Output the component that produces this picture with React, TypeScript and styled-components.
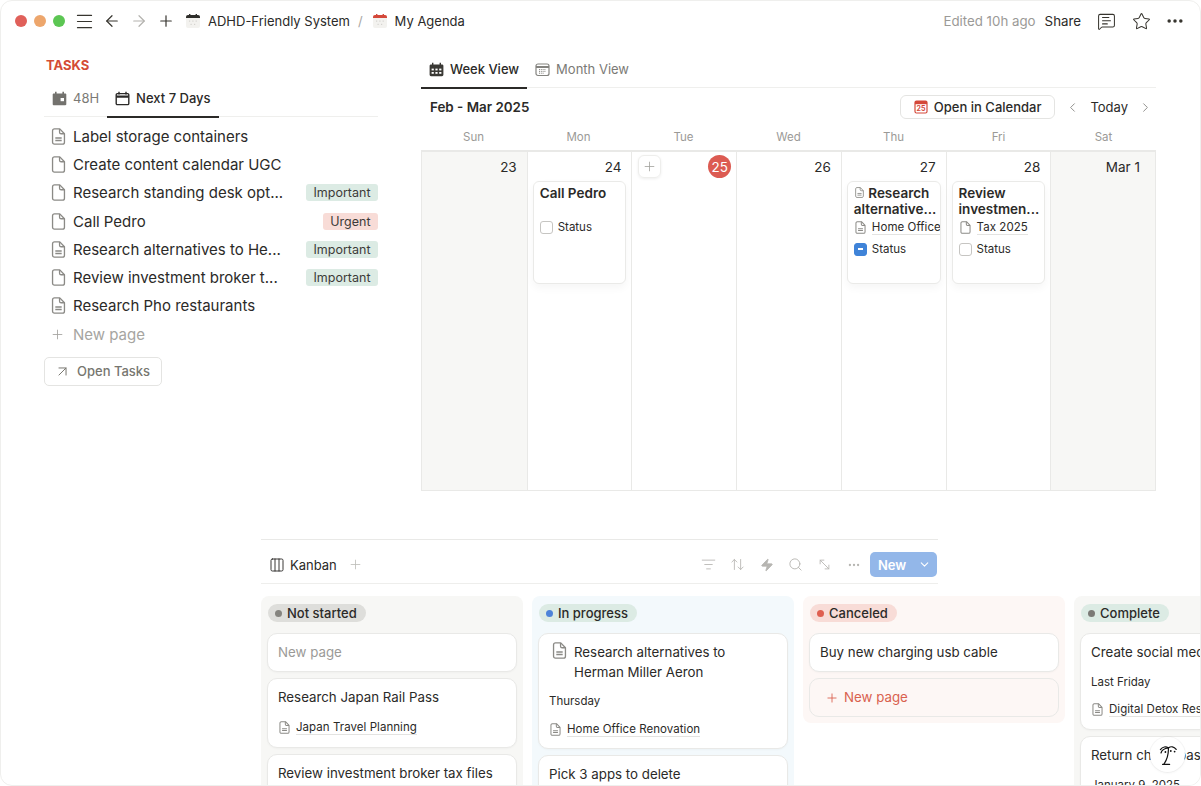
import React from "react";
import styled, { createGlobalStyle } from "styled-components";
import {
  ArrowLeft,
  ArrowRight,
  ArrowUpDown,
  ArrowUpRight,
  ChevronDown,
  ChevronLeft,
  ChevronRight,
  Columns3,
  Ellipsis,
  ListFilter,
  Menu,
  MessageSquareText,
  MoveDiagonal2,
  Plus,
  Search,
  Star,
  Zap,
} from "lucide-react";

const GlobalStyle = createGlobalStyle`
  html, body {
    margin: 0;
    padding: 0;
    background: #fff;
    overflow: hidden;
  }
  * { box-sizing: border-box; }
  body {
    font-family: Inter, "Liberation Sans", sans-serif;
    color: #2b2a28;
  }
`;

const Win = styled.div`
  width: 1201px;
  height: 786px;
  overflow: hidden;
  position: relative;
  border-radius: 12px;
  border: 1px solid #efefed;
  padding-top: 1px;
`;

/* top bar */
const TopBar = styled.div`
  display: flex;
  align-items: center;
  height: 38px;
  padding: 0 9px 0 14px;
  font-size: 13px;
`;

const Dots = styled.div`
  display: flex;
  gap: 7px;
  margin-right: 7px;
`;

const Dot = styled.span<{ $c: string }>`
  width: 12px;
  height: 12px;
  border-radius: 50%;
  background: ${({ $c }) => $c};
`;

const NavBtn = styled.span<{ $w: number; $dim?: boolean }>`
  display: flex;
  align-items: center;
  justify-content: center;
  width: ${({ $w }) => $w}px;
  color: ${({ $dim }) => ($dim ? "#b3b2ae" : "#37352f")};
`;

const CrumbIcon = styled.span`
  display: flex;
  margin-left: 4px;
`;

const Crumb = styled.span`
  margin-left: 7px;
  white-space: nowrap;
`;

const Slash = styled.span`
  color: #a8a7a4;
  margin: 0 5px 0 8px;
`;

const Spacer = styled.div`
  flex: 1;
`;

const Edited = styled.span`
  color: #9b9a97;
  font-size: 13.3px;
  margin-right: 9px;
`;

const Share = styled.span`
  font-size: 13.3px;
  margin-right: 8px;
`;

/* upper part */
const Upper = styled.div`
  display: grid;
  grid-template-columns: 334px 735px;
  column-gap: 43px;
  padding: 0 0 0 43px;
  height: 499px;
`;

const TasksCol = styled.div`
  padding-top: 15px;
`;

const TasksTitle = styled.div`
  color: #d44c36;
  font-weight: 700;
  font-size: 13px;
  line-height: 20px;
  margin: 0 0 4px 2px;
`;

const TabRow = styled.div<{ $h: number; $pt?: number }>`
  display: flex;
  align-items: stretch;
  height: ${({ $h }) => $h}px;
  padding-top: ${({ $pt }) => $pt ?? 0}px;
  border-bottom: 1.5px solid #efefed;
`;

const Tab = styled.div<{ $on?: boolean }>`
  display: flex;
  align-items: center;
  gap: 6px;
  padding: 0 8px;
  font-size: 13px;
  color: ${({ $on }) => ($on ? "#2b2a28" : "#7b7a76")};
  font-weight: ${({ $on }) => ($on ? 500 : 400)};
  margin-bottom: -1.5px;
  border-bottom: 2px solid ${({ $on }) => ($on ? "#2b2a28" : "transparent")};
`;

const TaskList = styled.div`
  display: flex;
  flex-direction: column;
  margin-top: 5.5px;
`;

const TaskRow = styled.div`
  display: flex;
  align-items: center;
  height: 28.2px;
  padding-left: 6px;
  gap: 6px;
  font-size: 15px;
`;

const TaskName = styled.span`
  flex: 1;
  white-space: nowrap;
`;

const Tag = styled.span<{ $red?: boolean }>`
  font-size: 12.5px;
  line-height: 17px;
  padding: 0 7.5px;
  border-radius: 3px;
  background: ${({ $red }) => ($red ? "#f8dcd7" : "#dcebe4")};
  color: #3c3b38;
`;

const NewRow = styled(TaskRow)`
  color: #a6a5a1;
  padding-left: 6px;
  gap: 8px;
  height: 30px;
`;

const OpenBtn = styled.div`
  display: inline-flex;
  align-items: center;
  gap: 6px;
  height: 29px;
  margin-top: 7px;
  padding: 0 11px 0 9px;
  border: 1.5px solid #e4e4e2;
  border-radius: 5px;
  font-size: 13px;
  font-weight: 500;
  color: #77766f;
`;

const CalCol = styled.div`
  padding-top: 12px;
`;

const CalHead = styled.div`
  display: flex;
  align-items: center;
  height: 38px;
  padding: 0 3px 0 9px;
  font-size: 13px;
`;

const CalTitle = styled.div`
  font-weight: 600;
  font-size: 13.4px;
`;

const CalBtn = styled.div`
  display: flex;
  align-items: center;
  gap: 6px;
  height: 24px;
  padding: 0 13px 0 13px;
  border: 1px solid #e4e4e2;
  border-radius: 6px;
  font-weight: 500;
  margin-right: 10px;
`;

const TodayText = styled.span`
  margin: 0 10px 0 10px;
`;

const DayNames = styled.div`
  display: grid;
  grid-template-columns: repeat(7, 1fr);
  height: 24px;
  padding-bottom: 2px;
  align-items: center;
  text-align: center;
  font-size: 11.5px;
  color: #9b9a97;
`;

const Grid = styled.div`
  display: grid;
  grid-template-columns: repeat(7, 1fr);
  height: 341px;
  border: 1px solid #e9e9e7;
  border-top-width: 2px;
`;

const Cell = styled.div<{ $off?: boolean }>`
  border-left: 1px solid #e9e9e7;
  background: ${({ $off }) => ($off ? "#f7f7f5" : "#fff")};
  padding: 0 5px;
  min-width: 0;
  &:first-child { border-left: 0; }
`;

const CellTop = styled.div`
  display: flex;
  align-items: center;
  height: 29px;
  font-size: 13.5px;
`;

const DateNum = styled.span<{ $pr?: number }>`
  margin-left: auto;
  padding-right: ${({ $pr }) => $pr ?? 5}px;
`;

const Today = styled.span`
  margin-left: auto;
  width: 23px;
  height: 23px;
  border-radius: 50%;
  background: #dc5b52;
  color: #fff;
  font-size: 13.5px;
  display: flex;
  align-items: center;
  justify-content: center;
`;

const AddBtn = styled.span`
  width: 23px;
  height: 23px;
  margin-left: 1px;
  border-radius: 6px;
  border: 1px solid #eeeeec;
  box-shadow: 0 1px 3px rgba(0, 0, 0, 0.07);
  display: flex;
  align-items: center;
  justify-content: center;
  color: #a3a29e;
`;

const EventCard = styled.div`
  height: 103px;
  padding: 4px 0 0 6px;
  background: #fff;
  border: 1px solid #eaeae8;
  border-radius: 6px;
  box-shadow: 0 4px 8px rgba(0, 0, 0, 0.04);
  overflow: hidden;
`;

const EventTitle = styled.div`
  font-size: 13.5px;
  font-weight: 600;
  line-height: 15.5px;
  min-height: 31px;
  white-space: nowrap;
`;

const EventLine = styled.div<{ $mt?: number }>`
  display: flex;
  align-items: center;
  gap: 5px;
  font-size: 11.5px;
  height: 16px;
  margin-top: ${({ $mt }) => $mt ?? 0}px;
  white-space: nowrap;
`;

const Check = styled.span<{ $on?: boolean }>`
  flex: none;
  width: 13px;
  height: 13px;
  border-radius: 3px;
  border: 1px solid ${({ $on }) => ($on ? "#3f83d8" : "#c6c5c2")};
  background: ${({ $on }) => ($on ? "#3f83d8" : "#fff")};
  display: flex;
  align-items: center;
  justify-content: center;
  &::after {
    content: "";
    display: ${({ $on }) => ($on ? "block" : "none")};
    width: 5px;
    height: 1.5px;
    background: #fff;
  }
`;

const Relation = styled.span`
  border-bottom: 1px solid #e3e3e1;
  line-height: 14px;
  font-weight: 400;
  letter-spacing: 0.05px;
`;

const IconSlot = styled.span`
  flex: none;
  display: flex;
  width: 13px;
  justify-content: center;
`;

/* kanban */
const KanbanArea = styled.div`
  margin-left: 260px;
`;

const ViewBar = styled.div`
  width: 677px;
  height: 45px;
  border-top: 1.5px solid #e9e9e7;
  border-bottom: 1px solid #eeeeec;
  display: flex;
  align-items: center;
  padding: 6px 0 0 8px;
  font-size: 13px;
`;

const ViewName = styled.span`
  margin: 0 11px 0 5px;
`;

const ToolBtn = styled.span`
  width: 29px;
  display: flex;
  justify-content: center;
  color: #b7b6b2;
`;

const NewBtn = styled.div`
  display: flex;
  align-items: center;
  justify-content: space-between;
  width: 67px;
  height: 25px;
  margin: 0 1px 0 2px;
  padding: 0 6px 0 8px;
  background: #93b7e9;
  border-radius: 5px;
  color: #fff;
  font-size: 13px;
  font-weight: 600;
`;

const Board = styled.div`
  display: flex;
  gap: 9px;
  align-items: flex-start;
  margin-top: 12px;
  width: 1000px;
`;

const Column = styled.div<{ $bg: string }>`
  flex: none;
  width: 262px;
  background: ${({ $bg }) => $bg};
  border-radius: 8px;
  padding: 8px 6px 6px;
  display: flex;
  flex-direction: column;
  gap: 6px;
`;

const Badge = styled.div<{ $bg: string }>`
  align-self: flex-start;
  display: flex;
  align-items: center;
  gap: 5px;
  height: 18px;
  margin: 0 0 5px 1px;
  padding: 0 9px 0 7px;
  border-radius: 9px;
  background: ${({ $bg }) => $bg};
  font-size: 13px;
  font-weight: 500;
`;

const BadgeDot = styled.span<{ $c: string }>`
  width: 7px;
  height: 7px;
  border-radius: 50%;
  background: ${({ $c }) => $c};
`;

const Card = styled.div<{ $h: number; $ghost?: boolean }>`
  flex: none;
  height: ${({ $h }) => $h}px;
  background: ${({ $ghost }) => ($ghost ? "transparent" : "#fff")};
  border: 1px solid #e9e9e7;
  border-radius: 10px;
  padding: 9px 10px 0;
  font-size: 13.3px;
  line-height: 19px;
  box-shadow: ${({ $ghost }) => ($ghost ? "none" : "0 1px 2px rgba(0, 0, 0, 0.03)")};
  white-space: nowrap;
  overflow: hidden;
`;

const Muted = styled.span`
  color: #9b9a97;
`;

const CardTitleRow = styled.div`
  display: flex;
  gap: 6px;
  padding-left: 2px;
  line-height: 20px;
  margin-top: -1px;
`;

const CardMeta = styled.div<{ $mt: number }>`
  display: flex;
  align-items: center;
  gap: 5px;
  font-size: 11.5px;
  margin-top: ${({ $mt }) => $mt}px;
  height: 16px;
`;

const NewCardLabel = styled.div`
  display: flex;
  align-items: center;
  gap: 5px;
  color: #d9614e;
  padding-left: 5px;
`;

const HelpBubble = styled.div`
  position: absolute;
  right: 15px;
  bottom: 13px;
  width: 35px;
  height: 35px;
  border-radius: 50%;
  background: #fff;
  box-shadow: 0 0 0 1px rgba(0, 0, 0, 0.03), 0 1px 3px rgba(0, 0, 0, 0.05);
  display: flex;
  align-items: center;
  justify-content: center;
`;

const DocIcon: React.FC<{ size?: number; lines?: boolean }> = ({ size = 16, lines }) => (
  <svg width={size} height={size} viewBox="0 0 16 16" fill="none" stroke="#8b8a86" strokeWidth="1.25" strokeLinejoin="round">
    <path d="M2.4 2.6c0-1 .7-1.8 1.8-1.8h5l4.4 4.6v8c0 1-.8 1.8-1.8 1.8H4.2c-1.1 0-1.8-.8-1.8-1.8z" />
    <path d="M9 .9v3c0 .9.6 1.5 1.5 1.5h3" />
    {lines && <path d="M5 9.4h6M5 11.8h6" />}
  </svg>
);

const CalGlyph: React.FC<{ top: string }> = ({ top }) => (
  <svg width="16" height="16" viewBox="0 0 16 16">
    <rect x="1" y="2" width="14" height="13" rx="2" fill="#f3f2ef" />
    <path d="M1 5V4a2 2 0 0 1 2-2h10a2 2 0 0 1 2 2v1z" fill={top} />
    <rect x="4" y="1" width="1.4" height="2" fill={top} />
    <rect x="10.6" y="1" width="1.4" height="2" fill={top} />
    <g fill="#d4d3cf">
      <rect x="4" y="7.5" width="1.2" height="1.2" />
      <rect x="7.3" y="7.5" width="1.2" height="1.2" />
      <rect x="10.6" y="7.5" width="1.2" height="1.2" />
      <rect x="5.5" y="10.8" width="1.2" height="1.2" />
      <rect x="9" y="10.8" width="1.2" height="1.2" />
    </g>
  </svg>
);

const WeekIcon = () => (
  <svg width="15" height="15" viewBox="0 0 15 15" fill="#3a3935">
    <path d="M3 .8h1.4v1.6h6.2V.8H12v1.6h1a1.4 1.4 0 0 1 1.4 1.4v9a1.4 1.4 0 0 1-1.4 1.4H2A1.4 1.4 0 0 1 .6 12.8v-9A1.4 1.4 0 0 1 2 2.4h1z" />
    <g fill="#fff">
      <rect x="2.6" y="6.6" width="2.2" height="1.8" />
      <rect x="6.4" y="6.6" width="2.2" height="1.8" />
      <rect x="10.2" y="6.6" width="2.2" height="1.8" />
      <rect x="2.6" y="10" width="2.2" height="1.8" />
      <rect x="6.4" y="10" width="2.2" height="1.8" />
      <rect x="10.2" y="10" width="2.2" height="1.8" />
    </g>
  </svg>
);

const MonthIcon = () => (
  <svg width="15" height="15" viewBox="0 0 15 15" fill="none" stroke="#84837f" strokeWidth="1.2">
    <rect x="1" y="2" width="13" height="11.5" rx="2" />
    <path d="M1 5h13" strokeWidth="2" />
    <path d="M4 7.6h7M4 9.4h7M4 11.2h5" strokeWidth="1" strokeDasharray="1 .8" />
  </svg>
);

const Solid48Icon = () => (
  <svg width="15" height="15" viewBox="0 0 15 15" fill="#73726e">
    <path d="M3 .8h1.6v1.6h5.8V.8H12v1.6h1.4c.5 0 .9.4.9.9v10c0 .5-.4.9-.9.9H1.6c-.5 0-.9-.4-.9-.9v-10c0-.5.4-.9.9-.9H3z" />
    <rect x="8.6" y="7" width="3.4" height="3.2" fill="#fff" />
  </svg>
);

const OutlineDayIcon = () => (
  <svg width="15" height="15" viewBox="0 0 15 15" fill="none" stroke="#2b2a28" strokeWidth="1.4">
    <rect x="1.2" y="2.6" width="12.6" height="11" rx="1.2" />
    <path d="M1.2 5.6h12.6" strokeWidth="2.2" />
    <path d="M4 .8v2.6M11 .8v2.6" />
  </svg>
);

const RedCalIcon = () => (
  <svg width="14" height="14" viewBox="0 0 14 14">
    <rect x="1" y="1" width="12" height="12" rx="1.5" fill="#fff" stroke="#d4483a" strokeWidth="1.2" />
    <rect x="1" y="1" width="12" height="3.2" fill="#d4483a" />
    <text x="7" y="11.4" textAnchor="middle" fontSize="7" fontWeight="700" fill="#d4483a" fontFamily="Inter, sans-serif">25</text>
  </svg>
);

const PalmIcon = () => (
  <svg width="20" height="22" viewBox="0 0 20 22" fill="none" stroke="#111" strokeWidth="1.2" strokeLinecap="round">
    <path d="M2.4 5.6C4.6 2.6 8 2.2 10.4 4c2.4-2 5.6-1.6 7.8 1.4" />
    <path d="M3 9c.6-2.6 3.2-4.6 7.4-5" />
    <path d="M10.4 4c.2 5.4-1 11-4.4 16" />
    <path d="M4.6 20.4h7" />
    <circle cx="12.8" cy="7" r=".9" fill="#111" stroke="none" />
    <circle cx="16.6" cy="7.6" r=".9" fill="#111" stroke="none" />
    <circle cx="7.4" cy="8" r=".9" fill="#111" stroke="none" />
  </svg>
);

type Task = { name: string; lines?: boolean; tag?: string };

const TASKS: Task[] = [
  { name: "Label storage containers", lines: true },
  { name: "Create content calendar UGC" },
  { name: "Research standing desk opt...", tag: "Important" },
  { name: "Call Pedro", tag: "Urgent" },
  { name: "Research alternatives to He...", lines: true, tag: "Important" },
  { name: "Review investment broker t...", tag: "Important" },
  { name: "Research Pho restaurants", lines: true },
];

const DAYS = ["Sun", "Mon", "Tue", "Wed", "Thu", "Fri", "Sat"];

const App: React.FC = () => {
  return (
    <Win>
      <GlobalStyle />
      <TopBar>
        <Dots>
          <Dot $c="#e0605a" />
          <Dot $c="#eda66c" />
          <Dot $c="#5cc653" />
        </Dots>
        <NavBtn $w={25}><Menu size={21} strokeWidth={1.4} /></NavBtn>
        <NavBtn $w={30}><ArrowLeft size={18} strokeWidth={1.6} /></NavBtn>
        <NavBtn $w={24} $dim><ArrowRight size={18} strokeWidth={1.6} /></NavBtn>
        <NavBtn $w={30}><Plus size={18} strokeWidth={1.6} /></NavBtn>
        <CrumbIcon><CalGlyph top="#2f2e2b" /></CrumbIcon>
        <Crumb>ADHD-Friendly System</Crumb>
        <Slash>/</Slash>
        <CrumbIcon><CalGlyph top="#d4483a" /></CrumbIcon>
        <Crumb>My Agenda</Crumb>
        <Spacer />
        <Edited>Edited 10h ago</Edited>
        <Share>Share</Share>
        <NavBtn $w={34}><MessageSquareText size={19} strokeWidth={1.3} /></NavBtn>
        <NavBtn $w={36}><Star size={19} strokeWidth={1.3} /></NavBtn>
        <NavBtn $w={32}><Ellipsis size={20} strokeWidth={2.2} /></NavBtn>
      </TopBar>

      <Upper>
        <TasksCol>
          <TasksTitle>TASKS</TasksTitle>
          <TabRow $h={38} $pt={2}>
            <Tab><Solid48Icon />48H</Tab>
            <Tab $on><OutlineDayIcon />Next 7 Days</Tab>
          </TabRow>
          <TaskList>
            {TASKS.map((t) => (
              <TaskRow key={t.name}>
                <DocIcon size={17} lines={t.lines} />
                <TaskName>{t.name}</TaskName>
                {t.tag && <Tag $red={t.tag === "Urgent"}>{t.tag}</Tag>}
              </TaskRow>
            ))}
            <NewRow>
              <Plus size={15} strokeWidth={1.4} />
              New page
            </NewRow>
          </TaskList>
          <OpenBtn>
            <ArrowUpRight size={17} strokeWidth={1.4} />
            Open Tasks
          </OpenBtn>
        </TasksCol>

        <CalCol>
          <TabRow $h={36}>
            <Tab $on><WeekIcon />Week View</Tab>
            <Tab><MonthIcon />Month View</Tab>
          </TabRow>
          <CalHead>
            <CalTitle>Feb - Mar 2025</CalTitle>
            <Spacer />
            <CalBtn><RedCalIcon />Open in Calendar</CalBtn>
            <ChevronLeft size={15} color="#8b8a86" strokeWidth={1.5} />
            <TodayText>Today</TodayText>
            <ChevronRight size={15} color="#8b8a86" strokeWidth={1.5} />
          </CalHead>
          <DayNames>
            {DAYS.map((d) => <span key={d}>{d}</span>)}
          </DayNames>
          <Grid>
            <Cell $off>
              <CellTop><DateNum>23</DateNum></CellTop>
            </Cell>
            <Cell>
              <CellTop><DateNum>24</DateNum></CellTop>
              <EventCard>
                <EventTitle>Call Pedro</EventTitle>
                <EventLine $mt={2}><Check />Status</EventLine>
              </EventCard>
            </Cell>
            <Cell>
              <CellTop>
                <AddBtn><Plus size={15} strokeWidth={1.3} /></AddBtn>
                <Today>25</Today>
              </CellTop>
            </Cell>
            <Cell>
              <CellTop><DateNum>26</DateNum></CellTop>
            </Cell>
            <Cell>
              <CellTop><DateNum>27</DateNum></CellTop>
              <EventCard>
                <EventTitle>
                  <DocIcon size={11} lines /> Research<br />alternative...
                </EventTitle>
                <EventLine $mt={2}>
                  <IconSlot><DocIcon size={13} lines /></IconSlot>
                  <Relation>Home Office</Relation>
                </EventLine>
                <EventLine $mt={6}><Check $on />Status</EventLine>
              </EventCard>
            </Cell>
            <Cell>
              <CellTop><DateNum>28</DateNum></CellTop>
              <EventCard>
                <EventTitle>Review<br />investmen...</EventTitle>
                <EventLine $mt={2}>
                  <IconSlot><DocIcon size={13} /></IconSlot>
                  <Relation>Tax 2025</Relation>
                </EventLine>
                <EventLine $mt={6}><Check />Status</EventLine>
              </EventCard>
            </Cell>
            <Cell $off>
              <CellTop><DateNum $pr={10}>Mar 1</DateNum></CellTop>
            </Cell>
          </Grid>
        </CalCol>
      </Upper>

      <KanbanArea>
        <ViewBar>
          <Columns3 size={16} strokeWidth={1.4} />
          <ViewName>Kanban</ViewName>
          <Plus size={15} color="#bdbcb8" strokeWidth={1.3} />
          <Spacer />
          <ToolBtn><ListFilter size={15} strokeWidth={1.4} /></ToolBtn>
          <ToolBtn><ArrowUpDown size={15} strokeWidth={1.4} /></ToolBtn>
          <ToolBtn><Zap size={14} strokeWidth={1.4} fill="#b7b6b2" /></ToolBtn>
          <ToolBtn><Search size={15} strokeWidth={1.5} /></ToolBtn>
          <ToolBtn><MoveDiagonal2 size={15} strokeWidth={1.4} /></ToolBtn>
          <ToolBtn><Ellipsis size={14} strokeWidth={2} /></ToolBtn>
          <NewBtn>New<ChevronDown size={13} strokeWidth={2} /></NewBtn>
        </ViewBar>

        <Board>
          <Column $bg="#f7f7f5">
            <Badge $bg="#dededb"><BadgeDot $c="#85847f" />Not started</Badge>
            <Card $h={39}><Muted>New page</Muted></Card>
            <Card $h={70}>
              Research Japan Rail Pass
              <CardMeta $mt={12}>
                <IconSlot><DocIcon size={13} lines /></IconSlot>
                <Relation>Japan Travel Planning</Relation>
              </CardMeta>
            </Card>
            <Card $h={60}>Review investment broker tax files</Card>
          </Column>

          <Column $bg="#f3f9fc">
            <Badge $bg="#dcebe4"><BadgeDot $c="#4d83d9" />In progress</Badge>
            <Card $h={116}>
              <CardTitleRow>
                <DocIcon size={17} lines />
                <span>Research alternatives to<br />Herman Miller Aeron</span>
              </CardTitleRow>
              <CardMeta $mt={11}>Thursday</CardMeta>
              <CardMeta $mt={12}>
                <IconSlot><DocIcon size={13} lines /></IconSlot>
                <Relation>Home Office Renovation</Relation>
              </CardMeta>
            </Card>
            <Card $h={60}>Pick 3 apps to delete</Card>
          </Column>

          <Column $bg="#fdf7f5">
            <Badge $bg="#f8dcd7"><BadgeDot $c="#df5f50" />Canceled</Badge>
            <Card $h={39}>Buy new charging usb cable</Card>
            <Card $ghost $h={39}>
              <NewCardLabel><Plus size={14} strokeWidth={1.5} />New page</NewCardLabel>
            </Card>
          </Column>

          <Column $bg="#f7f7f5">
            <Badge $bg="#dcebe4"><BadgeDot $c="#7b7a76" />Complete</Badge>
            <Card $h={97}>
              Create social media
              <CardMeta $mt={12}>Last Friday</CardMeta>
              <CardMeta $mt={11}>
                <IconSlot><DocIcon size={13} lines /></IconSlot>
                <Relation>Digital Detox Reset</Relation>
              </CardMeta>
            </Card>
            <Card $h={70}>
              Return chairs base
              <CardMeta $mt={12}>January 9, 2025</CardMeta>
            </Card>
          </Column>
        </Board>
      </KanbanArea>

      <HelpBubble><PalmIcon /></HelpBubble>
    </Win>
  );
};

export default App;
